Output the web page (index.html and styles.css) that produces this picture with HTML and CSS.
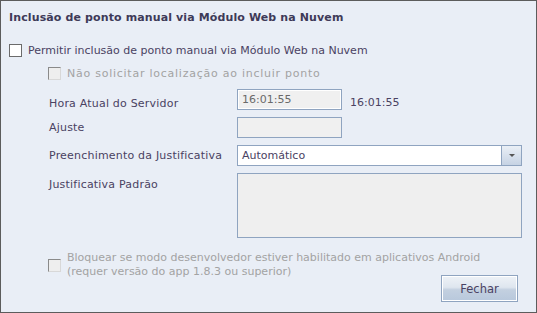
FILE: index.html
```html
<!DOCTYPE html>
<html lang="pt-BR">
<head>
  <meta charset="UTF-8">
  <title>Inclusão de ponto manual</title>
  <link rel="stylesheet" href="styles.css">
</head>
<body>
  <div class="window">
    <h1 class="title">Inclusão de ponto manual via Módulo Web na Nuvem</h1>

    <label class="check main-check">
      <span class="box"></span>
      <span>Permitir inclusão de ponto manual via Módulo Web na Nuvem</span>
    </label>

    <div class="sub">
      <label class="check disabled location">
        <span class="box"></span>
        <span>Não solicitar localização ao incluir ponto</span>
      </label>

      <div class="form">
        <div class="row clock-row">
          <span class="label">Hora Atual do Servidor</span>
          <span class="field small readonly">16:01:55</span>
          <span class="clock">16:01:55</span>
        </div>
        <div class="row">
          <span class="label">Ajuste</span>
          <span class="field small"></span>
        </div>
        <div class="row">
          <span class="label">Preenchimento da Justificativa</span>
          <span class="select">
            <span class="select-text">Automático</span>
            <span class="select-btn"><span class="arrow"></span></span>
          </span>
        </div>
        <div class="row top">
          <span class="label">Justificativa Padrão</span>
          <span class="area"></span>
        </div>
      </div>

      <label class="check disabled android">
        <span class="box"></span>
        <span>Bloquear se modo desenvolvedor estiver habilitado em aplicativos Android<br>(requer versão do app 1.8.3 ou superior)</span>
      </label>
    </div>

    <div class="actions">
      <button class="btn">Fechar</button>
    </div>
  </div>
</body>
</html>
```

FILE: styles.css
```css
html, body {
  margin: 0;
  padding: 0;
}

body {
  font-family: "DejaVu Sans", Verdana, sans-serif;
  font-size: 11px;
  line-height: 13px;
  color: #4a4262;
}

.window {
  width: 535px;
  height: 311px;
  background: #e9eef6;
  border: 1px solid #5c5c5c;
}

.title {
  margin: 0;
  padding: 10px 0 0 8px;
  font-size: 11px;
  line-height: 13px;
  font-weight: bold;
  letter-spacing: 0.12px;
  color: #3e3a58;
  height: 21px;
}

.check {
  display: flex;
  align-items: flex-start;
  gap: 6px;
}

.box {
  width: 11px;
  height: 11px;
  border: 1px solid #6b6b6b;
  background: #fff;
  flex: none;
}

.main-check {
  padding: 12px 0 0 8px;
}

.disabled {
  color: #a3a3a3;
}

.disabled .box {
  border-color: #8a8a8a #d8d8d8 #d8d8d8 #8a8a8a;
  background: #eeeeee;
}

.sub {
  padding-left: 47px;
}

.location {
  margin-top: 10px;
  letter-spacing: 0.75px;
}

.form {
  margin-top: 9px;
  display: flex;
  flex-direction: column;
  gap: 7px;
}

.row {
  display: flex;
  align-items: center;
}

.row.clock-row {
  align-items: flex-end;
}

.row.top {
  align-items: flex-start;
}

.row.top .label {
  padding-top: 5px;
}

.label {
  width: 188px;
  padding-left: 1px;
  flex: none;
  letter-spacing: 0.2px;
}

.field {
  box-sizing: border-box;
  height: 21px;
  border: 1px solid #8fa4c0;
  background: #f0f0f0;
}

.small {
  width: 105px;
}

.readonly {
  box-shadow: inset 0 0 0 1px #fff;
  padding: 3px 4px;
  line-height: 13px;
  color: #6a6a6a;
}

.clock {
  margin-left: 8px;
  padding-bottom: 1px;
}

.select {
  box-sizing: border-box;
  width: 285px;
  height: 21px;
  border: 1px solid #8fa4c0;
  background: #fff;
  display: flex;
}

.select-text {
  flex: 1;
  padding: 3px 4px;
}

.select-btn {
  width: 19px;
  border-left: 1px solid #8fa4c0;
  background: linear-gradient(#eaeff6, #c6d3e4);
  display: flex;
  align-items: center;
  justify-content: center;
}

.arrow {
  width: 0;
  height: 0;
  border-left: 3px solid transparent;
  border-right: 3px solid transparent;
  border-top: 3px solid #555;
}

.area {
  box-sizing: border-box;
  width: 285px;
  height: 65px;
  border: 1px solid #8fa4c0;
  background: #efefef;
}

.android {
  margin-top: 13px;
  line-height: 14px;
  align-items: center;
}

.actions {
  display: flex;
  justify-content: flex-end;
  padding-right: 18px;
  margin-top: -4px;
}

.btn {
  width: 77px;
  height: 27px;
  border: 1px solid #8fa4c0;
  box-shadow: inset 0 0 0 1px #fff;
  background: linear-gradient(#eef2f7 0%, #dfe6ef 45%, #c3d0e0 55%, #b8c8dc 100%);
  font-family: "DejaVu Sans", Verdana, sans-serif;
  font-size: 11.5px;
  color: #4a4262;
  padding: 0;
}
```
